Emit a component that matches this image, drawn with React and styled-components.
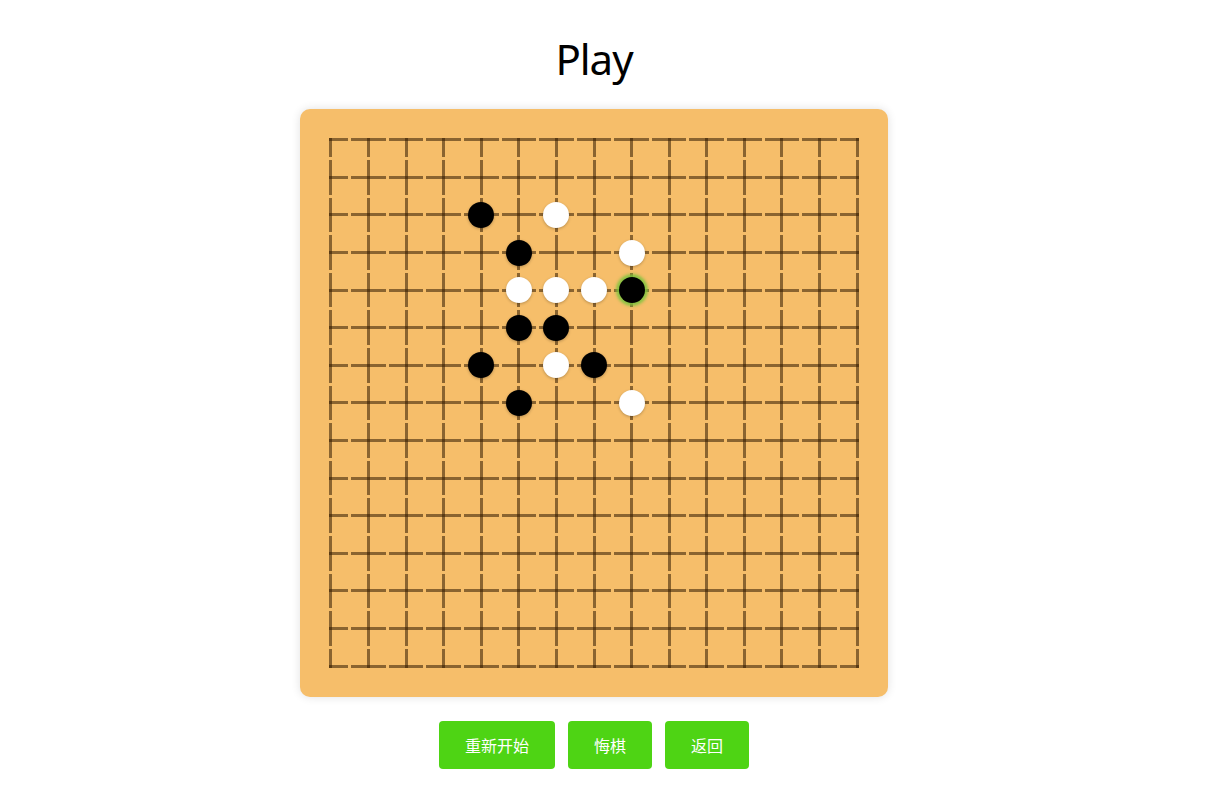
import React, { useState } from "react";
import styled, { createGlobalStyle, css } from "styled-components";

const SIZE = 15;
const CELL = 37.6;

const GlobalStyle = createGlobalStyle`
    body {
        margin: 0;
        background: #ffffff;
        font-family: "Noto Sans", "Noto Sans CJK SC", sans-serif;
    }
`;

const Page = styled.div`
    display: flex;
    flex-direction: column;
    align-items: center;
    padding: 36px 34px 0 0;
`;

const Title = styled.h1`
    margin: 0 0 28px;
    font-size: 42px;
    line-height: 45px;
    font-weight: 400;
    letter-spacing: -1px;
    color: #000;
`;

const Board = styled.div`
    display: grid;
    grid-template-columns: repeat(${SIZE}, ${CELL}px);
    grid-template-rows: repeat(${SIZE}, ${CELL}px);
    padding: 12px;
    background: #f6be6a;
    border-radius: 10px;
    box-shadow: 0 0 10px rgba(0, 0, 0, 0.12);
`;

const Cell = styled.div`
    position: relative;
    display: flex;
    align-items: center;
    justify-content: center;

    &::before {
        content: "";
        position: absolute;
        top: 50%;
        margin-top: -1.5px;
        height: 3px;
        left: ${(p) => (p.$col === 0 ? "calc(50% - 1.5px)" : "1.5px")};
        right: ${(p) => (p.$col === SIZE - 1 ? "calc(50% - 1.5px)" : "1.5px")};
        background: rgba(50, 25, 0, 0.55);
    }

    &::after {
        content: "";
        position: absolute;
        left: 50%;
        margin-left: -1.5px;
        width: 3px;
        top: ${(p) => (p.$row === 0 ? "calc(50% - 1.5px)" : "1.5px")};
        bottom: ${(p) => (p.$row === SIZE - 1 ? "calc(50% - 1.5px)" : "1.5px")};
        background: rgba(50, 25, 0, 0.55);
    }
`;

const Stone = styled.div`
    position: relative;
    z-index: 1;
    width: 26px;
    height: 26px;
    border-radius: 50%;
    background: ${(p) => (p.$color === "black" ? "#000" : "#fff")};
    box-shadow: 0 1px 3px rgba(0, 0, 0, 0.25);
    ${(p) =>
        p.$last &&
        css`
            box-shadow: 0 0 3px 3px rgba(120, 195, 60, 0.85);
        `}
`;

const Actions = styled.div`
    display: flex;
    gap: 13px;
    margin-top: 24px;
`;

const Button = styled.button`
    height: 48px;
    padding: 0 26px;
    border: none;
    border-radius: 4px;
    background: #4ed414;
    color: #fff;
    font-family: "Noto Sans CJK SC", sans-serif;
    font-size: 16px;
    cursor: pointer;
`;

// [col, row, color]
const moves = [
    [4, 2, "black"],
    [6, 2, "white"],
    [5, 3, "black"],
    [8, 3, "white"],
    [5, 4, "white"],
    [6, 4, "white"],
    [7, 4, "white"],
    [5, 5, "black"],
    [6, 5, "black"],
    [4, 6, "black"],
    [6, 6, "white"],
    [7, 6, "black"],
    [5, 7, "black"],
    [8, 7, "white"],
    [8, 4, "black"],
];

const App = () => {
    const [stones] = useState(moves);
    const last = stones[stones.length - 1];

    const find = (c, r) => stones.find((s) => s[0] === c && s[1] === r);

    const cells = [];
    for (let r = 0; r < SIZE; r++) {
        for (let c = 0; c < SIZE; c++) {
            const s = find(c, r);
            cells.push(
                <Cell key={`${r}-${c}`} $row={r} $col={c}>
                    {s && <Stone $color={s[2]} $last={s === last} />}
                </Cell>
            );
        }
    }

    return (
        <>
            <GlobalStyle />
            <Page>
                <Title>Play</Title>
                <Board>{cells}</Board>
                <Actions>
                    <Button>重新开始</Button>
                    <Button>悔棋</Button>
                    <Button>返回</Button>
                </Actions>
            </Page>
        </>
    );
};

export default App;
